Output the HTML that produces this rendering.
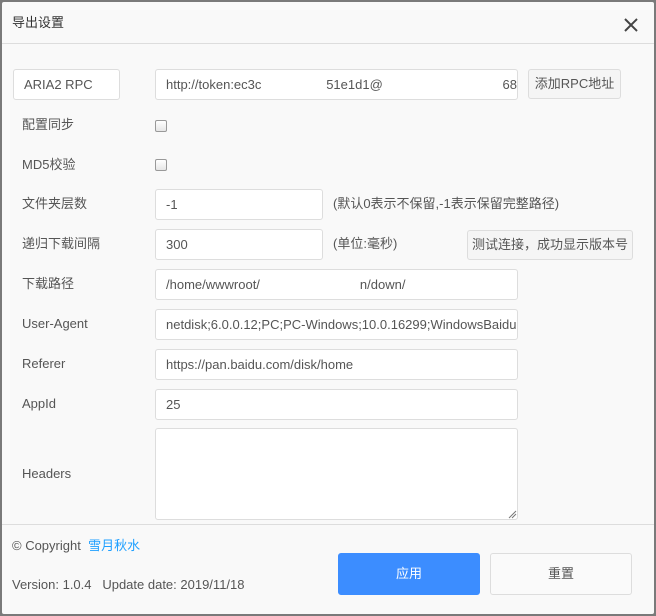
<!DOCTYPE html>
<html><head><meta charset="utf-8"><style>
*{box-sizing:border-box;margin:0;padding:0}
body{width:656px;height:616px;background:#7a7a7a;font-family:"Liberation Sans","Noto Sans CJK SC",sans-serif;font-size:13px;line-height:16px;color:#555;position:relative;overflow:hidden}
.dlg{position:absolute;left:2px;top:2px;width:652px;height:612px;background:#f9f9f9;border-radius:2px}
.a{position:absolute;white-space:nowrap}
.hd{left:0;top:0;width:652px;height:42px;border-bottom:1px solid #ddd}
.title{left:10px;top:13px;font-size:13px;color:#333}
.inp{position:absolute;background:#fff;border:1px solid #ddd;border-radius:3px;height:31px;display:flex;align-items:center;padding-left:10px;color:#555;white-space:nowrap;overflow:hidden}
.btn{position:absolute;background:#f5f5f5;border:1px solid #ddd;border-radius:3px;display:flex;align-items:center;justify-content:center;color:#555;white-space:nowrap}
.lbl{position:absolute;left:20px;color:#555}
.cb{position:absolute;width:12px;height:12px;border:1px solid #999;border-radius:2px;background:linear-gradient(#fff,#e6e6e6)}
</style></head><body>
<div class="dlg">
<div class="a hd"></div>
<div class="a title">导出设置</div>
<svg class="a" style="left:621px;top:15px" width="16" height="16"><path d="M2 2L14 14M14 2L2 14" stroke="#444" stroke-width="2"/></svg>

<div class="inp" style="left:11px;top:67px;width:107px">ARIA2 RPC</div>
<div class="inp" style="left:153px;top:67px;width:363px">http://token:ec3c<span style="display:inline-block;width:66px"></span>51e1d1@<span style="display:inline-block;width:122px"></span>68</div>
<div class="btn" style="left:526px;top:67px;width:93px;height:30px">添加RPC地址</div>

<div class="lbl" style="top:115px">配置同步</div><div class="cb" style="left:153px;top:118px"></div>
<div class="lbl" style="top:155px">MD5校验</div><div class="cb" style="left:153px;top:157px"></div>

<div class="lbl" style="top:194px">文件夹层数</div>
<div class="inp" style="left:153px;top:187px;width:168px">-1</div>
<div class="a" style="left:331px;top:194px">(默认0表示不保留,-1表示保留完整路径)</div>

<div class="lbl" style="top:234px">递归下载间隔</div>
<div class="inp" style="left:153px;top:227px;width:168px">300</div>
<div class="a" style="left:331px;top:234px">(单位:毫秒)</div>
<div class="btn" style="left:465px;top:228px;width:166px;height:30px">测试连接，成功显示版本号</div>

<div class="lbl" style="top:274px">下载路径</div>
<div class="inp" style="left:153px;top:267px;width:363px">/home/wwwroot/<span style="display:inline-block;width:100px"></span>n/down/</div>
<div class="lbl" style="top:314px">User-Agent</div>
<div class="inp" style="left:153px;top:307px;width:363px">netdisk;6.0.0.12;PC;PC-Windows;10.0.16299;WindowsBaiduYunGuanJia</div>
<div class="lbl" style="top:354px">Referer</div>
<div class="inp" style="left:153px;top:347px;width:363px">https://pan.baidu.com/disk/home</div>
<div class="lbl" style="top:394px">AppId</div>
<div class="inp" style="left:153px;top:387px;width:363px">25</div>
<div class="lbl" style="top:464px">Headers</div>
<div class="inp" style="left:153px;top:426px;width:363px;height:92px"></div>
<svg class="a" style="left:505px;top:507px" width="10" height="10"><path d="M9 2L2 9M9 5L5 9" stroke="#777" stroke-width="1"/></svg>

<div class="a" style="left:0;top:522px;width:652px;border-top:1px solid #ddd"></div>
<div class="a" style="left:10px;top:536px">© Copyright &nbsp;<span style="color:#1e9fff">雪月秋水</span></div>
<div class="a" style="left:10px;top:575px">Version: 1.0.4 &nbsp; Update date: 2019/11/18</div>
<div class="btn" style="left:336px;top:551px;width:142px;height:42px;background:#3c8dff;border-color:#3c8dff;color:#fff">应用</div>
<div class="btn" style="left:488px;top:551px;width:142px;height:42px;background:#fafafa">重置</div>
</div>
</body></html>
